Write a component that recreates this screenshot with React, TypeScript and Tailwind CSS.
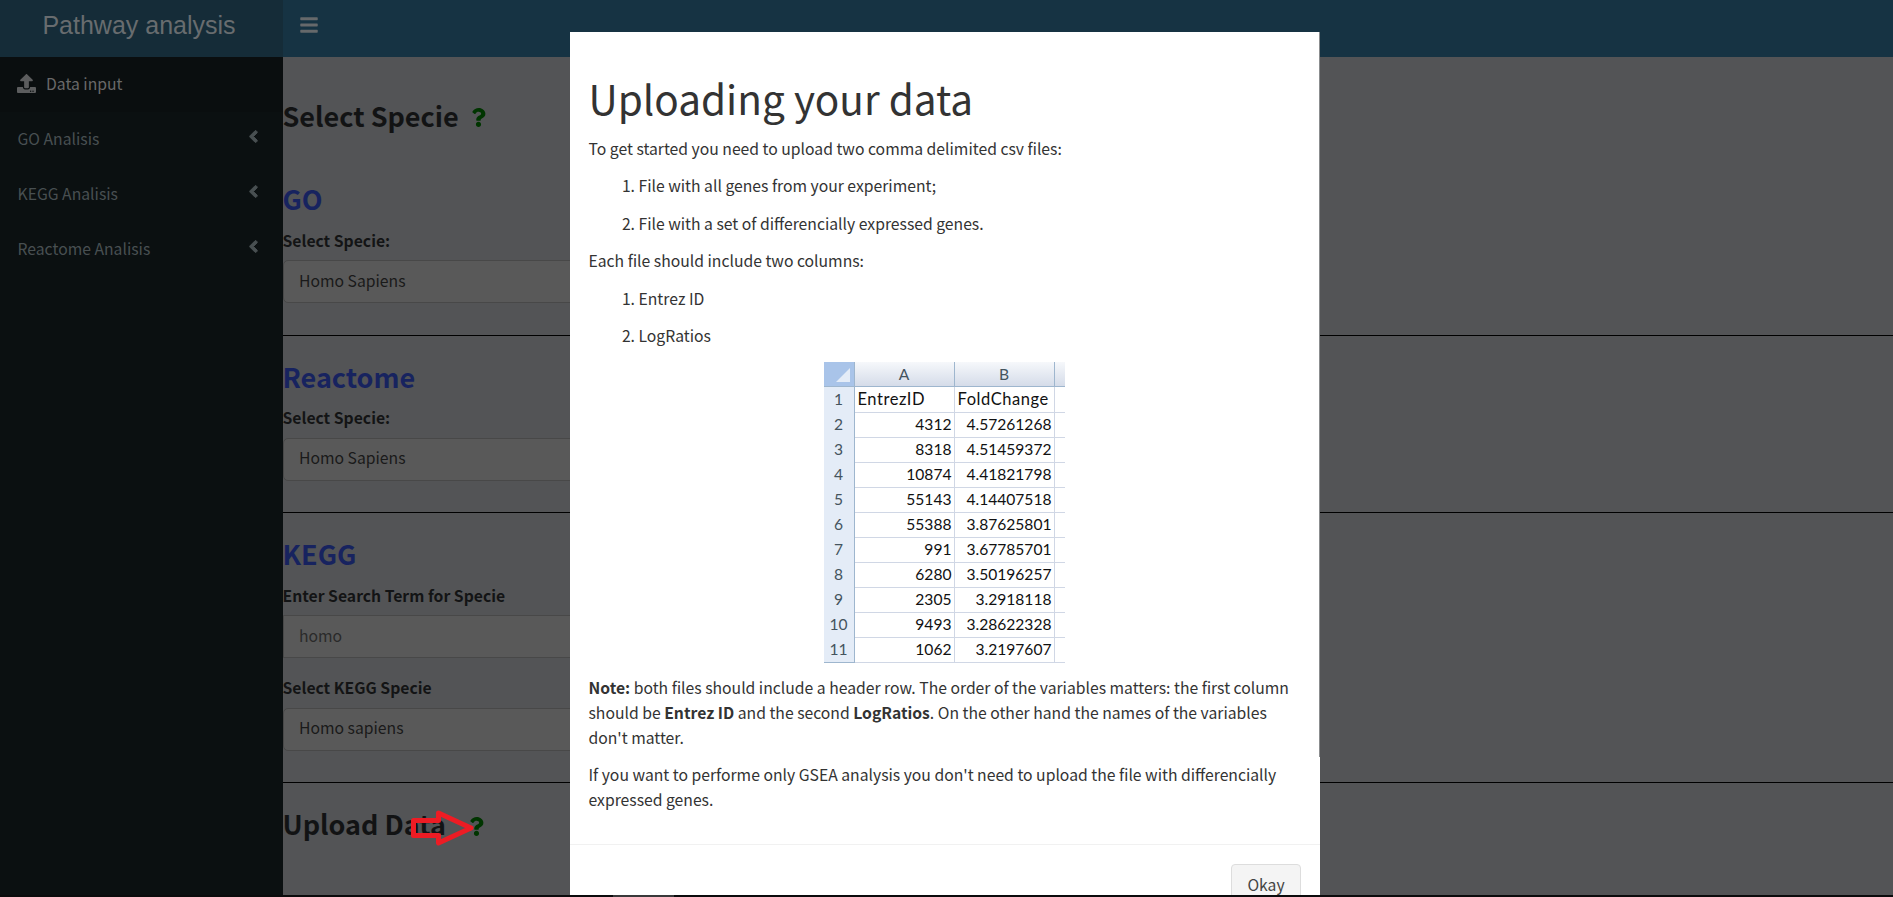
import type { ReactNode } from 'react';
import { FaAngleLeft, FaBars, FaQuestion, FaUpload } from 'react-icons/fa';

const genes = [
  ['4312', '4.57261268'],
  ['8318', '4.51459372'],
  ['10874', '4.41821798'],
  ['55143', '4.14407518'],
  ['55388', '3.87625801'],
  ['991', '3.67785701'],
  ['6280', '3.50196257'],
  ['2305', '3.2918118'],
  ['9493', '3.28622328'],
  ['1062', '3.2197607'],
];

function Sidebar() {
  return (
    <aside className="w-[283px] shrink-0 bg-[#0b1011] text-[#484f51]">
      <nav className="flex flex-col">
        <a className="flex h-[55px] items-center bg-[#0a0e0f] pb-[3px] pl-[17px] text-[#696969]">
          <FaUpload className="mr-[10px] size-[19px] text-[#5c5d5e]" />
          Data input
        </a>
        {['GO Analisis', 'KEGG Analisis', 'Reactome Analisis'].map((label) => (
          <a key={label} className="flex h-[55px] items-center justify-between pr-[20px] pb-[3px] pl-[17.5px]">
            {label}
            <FaAngleLeft className="mb-[3px] size-[19px]" stroke="currentColor" strokeWidth="24" />
          </a>
        ))}
      </nav>
    </aside>
  );
}

function Heading({ children, className }: { children: ReactNode; className: string }) {
  return (
    <h2 className={`-ml-[0.5px] flex h-[33px] items-center text-[27px] leading-[33px] font-bold ${className}`}>
      {children}
    </h2>
  );
}

function Label({ children, className }: { children: ReactNode; className: string }) {
  return <label className={`-ml-[0.5px] block h-[25px] font-bold text-[#131415] ${className}`}>{children}</label>;
}

function Field({ children, className }: { children: ReactNode; className: string }) {
  return (
    <div
      className={`flex h-[43px] w-[400px] items-center border border-[#484848] bg-[#595959] pl-[15px] ${className}`}
    >
      {children}
    </div>
  );
}

function Content() {
  return (
    <main className="min-w-0 flex-1 bg-[#535456] pt-[42px] text-[#121314]">
      <Heading className="">
        Select Specie <FaQuestion className="mt-[4px] ml-[10px] size-[19px] text-[#003500]" />
      </Heading>
      <Heading className="mt-[50px] text-[#17235f]">GO</Heading>
      <Label className="mt-[13px]">Select Specie:</Label>
      <Field className="mt-[7px] rounded-[5px] pb-[3px] text-[#1a1a1a]">Homo Sapiens</Field>
      <hr className="mt-[32px] border-[#000000]" />
      <Heading className="mt-[24px] text-[#17235f]">Reactome</Heading>
      <Label className="mt-[12px]">Select Specie:</Label>
      <Field className="mt-[8px] rounded-[5px] pb-[5px] text-[#1a1a1a]">Homo Sapiens</Field>
      <hr className="mt-[31px] border-[#000000]" />
      <Heading className="mt-[24px] text-[#17235f]">KEGG</Heading>
      <Label className="mt-[13px]">Enter Search Term for Specie</Label>
      <Field className="mt-[7px] pb-[3px] text-[#2a2a2a]">homo</Field>
      <Label className="mt-[17px]">Select KEGG Specie</Label>
      <Field className="mt-[8px] rounded-[5px] pb-[5px] text-[#1a1a1a]">Homo sapiens</Field>
      <hr className="mt-[31px] border-[#000000]" />
      <Heading className="relative mt-[24px]">
        Upload Data <FaQuestion className="mt-[5px] ml-[21px] size-[19px] text-[#003500]" />
        <svg className="absolute top-px left-[127px]" width="66" height="40" viewBox="0 0 66 40" fill="none">
          <path
            d="M3.5 12.5H28.5V5L61 20L28.5 35V27.5H3.5Z"
            stroke="#ed1c24"
            strokeWidth="5"
            strokeLinejoin="round"
          />
        </svg>
      </Heading>
    </main>
  );
}

function Spreadsheet() {
  return (
    <div className="ml-[235px] grid w-[241px] grid-cols-[31px_100px_100px_10px] font-[Lato,sans-serif] text-[15.6px] leading-[25px] text-[#111111]">
      <div className="flex h-[25px] items-end justify-end border-r border-b border-[#9eb6ce] bg-[#a9c4e9] p-[4px]">
        <svg width="14" height="14" viewBox="0 0 14 14">
          <path d="M14 0V14H0Z" fill="#e4ecf7" />
        </svg>
      </div>
      {['A', 'B', ''].map((name, i) => (
        <div
          key={i}
          className="h-[25px] border-r border-b border-[#9eb6ce] bg-linear-to-b from-[#f6f8fb] to-[#d5dce9] text-center text-[#44545e] nth-4:border-r-0"
        >
          {name}
        </div>
      ))}
      {[['EntrezID', 'FoldChange'], ...genes].map((row, i) => (
        <div key={i} className="col-span-4 grid h-[25px] grid-cols-subgrid">
          <div className="border-r border-b border-[#9eb6ce] bg-[#e4ecf7] text-center text-[#44545e]">{i + 1}</div>
          {row.map((cell) => (
            <div
              key={cell}
              className={`border-r border-b border-[#d0d7e5] whitespace-nowrap ${i === 0 ? 'pl-[3px] text-[16.5px] tracking-[0.55px]' : 'pr-[2px] text-right'}`}
            >
              {cell}
            </div>
          ))}
          <div className="border-b border-[#d0d7e5]" />
        </div>
      ))}
    </div>
  );
}

function UploadDialog() {
  return (
    <div className="absolute top-[32px] left-[570px] flex h-[863px] w-[750px] flex-col overflow-hidden bg-white text-[#333333]">
      <div className="absolute top-0 right-0 h-[725px] w-px bg-[#8b8d8f]" />
      <div className="h-[813px] shrink-0 border-b border-[#f1f1f1] pt-[41px] pr-[19px] pl-[18.5px]">
        <h1 className="text-[40.5px] leading-[50px]">Uploading your data</h1>
        <p className="mt-[12.5px]">To get started you need to upload two comma delimited csv files:</p>
        <ol className="mt-[12.5px] flex list-decimal flex-col gap-[12.5px] pl-[50px]">
          <li>File with all genes from your experiment;</li>
          <li>File with a set of differencially expressed genes.</li>
        </ol>
        <p className="mt-[12.5px]">Each file should include two columns:</p>
        <ol className="mt-[12.5px] flex list-decimal flex-col gap-[12.5px] pl-[50px]">
          <li>Entrez ID</li>
          <li>LogRatios</li>
        </ol>
        <div className="mt-[14px]">
          <Spreadsheet />
        </div>
        <p className="mt-[12.5px]">
          <b>Note:</b> both files should include a header row. The order of the variables matters: the first column
          <br />
          should be <b>Entrez ID</b> and the second <b>LogRatios</b>. On the other hand the names of the variables
          <br />
          don't matter.
        </p>
        <p className="mt-[12.5px]">
          If you want to performe only GSEA analysis you don't need to upload the file with differencially
          <br />
          expressed genes.
        </p>
      </div>
      <div className="flex justify-end pt-[19px] pr-[19px]">
        <button className="h-[43px] w-[70px] shrink-0 rounded-[4px] border border-[#dddddd] bg-[#f4f4f4] pb-[3px] text-[#444444]">
          Okay
        </button>
      </div>
    </div>
  );
}

export default function App() {
  return (
    <div className="relative flex h-[897px] w-[1893px] flex-col overflow-hidden bg-[#0b0b0c] font-['Noto_Sans_CJK_SC',sans-serif] text-[15.72px] leading-[25px]">
      <header className="flex h-[57px] shrink-0">
        <div className="flex w-[283px] justify-center bg-[#152c38] pr-[5px] font-['Liberation_Sans',sans-serif] text-[25px] leading-[50px] text-[#686c6f]">
          Pathway analysis
        </div>
        <div className="flex flex-1 bg-[#163343] pt-[15px] pl-[16px] text-[#66696b]">
          <FaBars className="size-[20px]" />
        </div>
      </header>
      <div className="flex h-[838px] shrink-0 overflow-hidden">
        <Sidebar />
        <Content />
      </div>
      <div className="ml-[613px] h-[2px] w-[61px] bg-[#39393a]" />
      <UploadDialog />
    </div>
  );
}
